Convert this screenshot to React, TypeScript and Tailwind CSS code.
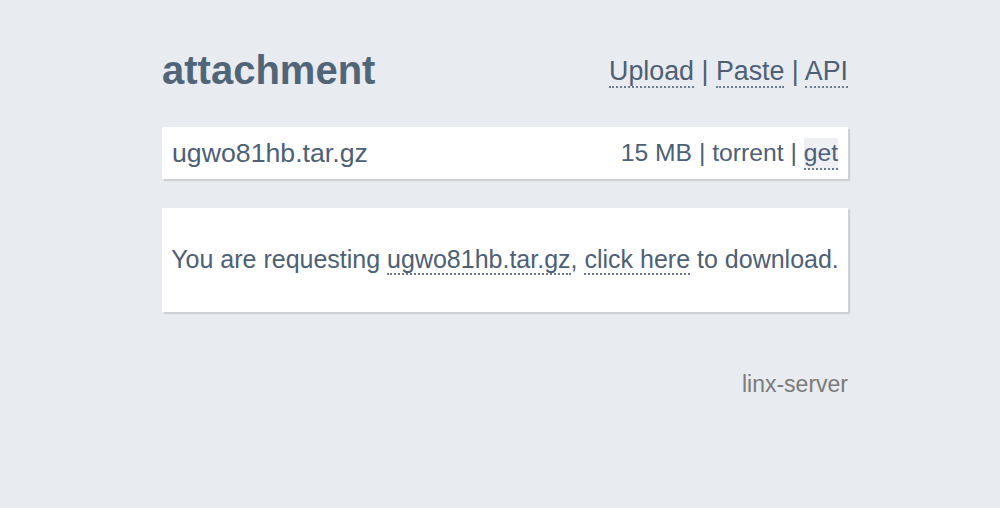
import React from "react";

const link = "border-b-2 border-dotted border-[#6a7b8d]";

export default function App() {
  return (
    <div
      className="min-h-[508px] w-full bg-[#e8ebf0] text-[#4d6075]"
      style={{ fontFamily: '"Liberation Sans", Arial, sans-serif' }}
    >
      <div className="ml-[162px] w-[686px] pt-[47px]">
        <div className="flex items-end justify-between">
          <h1 className="text-[40px] font-bold leading-[46px] text-[#516579]">attachment</h1>
          <nav className="text-[26.8px] leading-[30px] text-[#4d6075] pb-[7px]">
            <a className={link}>Upload</a>
            <span> | </span>
            <a className={link}>Paste</a>
            <span> | </span>
            <a className={link}>API</a>
          </nav>
        </div>

        <div className="mt-[34px] flex h-[52px] items-center justify-between bg-white pl-[10px] pr-[10px] shadow-[2px_2px_1px_#cfd1d4]">
          <span className="text-[26.7px]">ugwo81hb.tar.gz</span>
          <span className="text-[24.7px]">
            15 MB | torrent |{" "}
            <a className={"inline-block bg-[#eef0f3] leading-[30px] " + link}>get</a>
          </span>
        </div>

        <div className="mt-[29px] flex h-[104px] items-center justify-center bg-white shadow-[2px_2px_1px_#cfd1d4]">
          <p className="text-[25px]">
            You are requesting <a className={link}>ugwo81hb.tar.gz</a>,{" "}
            <a className={link}>click here</a> to download.
          </p>
        </div>

        <div className="mt-[55px] text-right text-[23px] text-[#7b7b7b]">linx-server</div>
      </div>
    </div>
  );
}
